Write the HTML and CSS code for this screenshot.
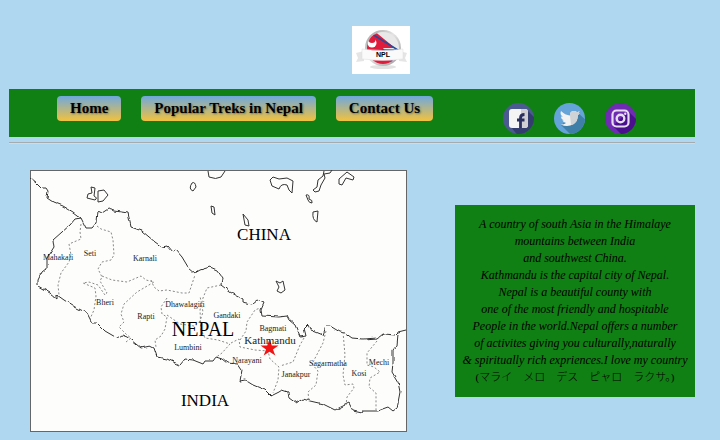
FILE: index.html
```html
<!DOCTYPE html>
<html lang="en">
<head>
<meta charset="utf-8">
<title>Nepal</title>
<link rel="stylesheet" href="styles.css">
</head>
<body>
<header class="brand">
  <svg class="logo" viewBox="0 0 58 48" role="img" aria-label="NPL flag badge">
    <defs>
      <linearGradient id="ring" x1="0" y1="0" x2="1" y2="1"><stop offset="0" stop-color="#999"/><stop offset=".45" stop-color="#e4e4e4"/><stop offset="1" stop-color="#999"/></linearGradient>
      <clipPath id="disc"><circle cx="31" cy="22" r="16"/></clipPath>
    </defs>
    <rect width="58" height="48" fill="#fff"/>
    <ellipse cx="31" cy="41" rx="13" ry="2" fill="#e2e2e2"/>
    <circle cx="31" cy="22" r="18" fill="url(#ring)"/>
    <circle cx="31" cy="22" r="16" fill="#e8e8e9"/>
    <g clip-path="url(#disc)">
      <path d="M14 4h7l22 18H31l13 17H14z" fill="#e01c3c"/>
      <path d="M20 8l26 16H31l13 16" fill="none" stroke="#244b9c" stroke-width="1.500"/>
      <circle cx="20" cy="17" r="4.500" fill="#fff"/><circle cx="20" cy="13.500" r="3.500" fill="#e01c3c"/>
    </g>
    <path d="M4 27l8-2v10l-8 1 2-4zM55 27l-8-2v10l8 1-2-4z" fill="#e5e5e5"/>
    <path d="M10 23q21 3 41 0v10q-20 3-41 0z" fill="#fafafa" stroke="#ddd" stroke-width=".5"/>
    <text class="logo-text" x="31" y="31">NPL</text>
  </svg>
</header>

<nav class="bar" aria-label="Main">
  <ul class="menu">
    <li><a class="pill" href="#home">Home</a></li>
    <li><a class="pill" href="#treks">Popular Treks in Nepal</a></li>
    <li><a class="pill" href="#contact">Contact Us</a></li>
  </ul>
  <ul class="social">
    <li><a href="#facebook" aria-label="Facebook"><svg viewBox="0 0 31 31">
      <clipPath id="round"><circle cx="15.500" cy="15.500" r="15.500"/></clipPath>
      <g clip-path="url(#round)"><path fill="#4b5a91" d="M0 0h31v31H0z"/><path fill="#333d6e" d="M24 7l10 10v17H16L8 24z"/>
      <rect x="6" y="6" width="19" height="19" rx="3" fill="#f4f4f5"/><path d="M18 6h4q3 0 3 3v13q0 3-3 3h-4z" fill="#cfcfd3"/>
      <path d="M17.500 25v-10q0-3.500 4-3.500M14 17h7.500" fill="none" stroke="#29305f" stroke-width="2.800"/></g>
    </svg></a></li>
    <li><a href="#twitter" aria-label="Twitter"><svg viewBox="0 0 31 31">
      <g clip-path="url(#round)"><path fill="#64a4d9" d="M0 0h31v31H0z"/><path fill="#407fa8" d="M24 10l10 9v15H19L7 22z"/>
      <path fill="#f2f2f2" d="M7 8q4 4 9 4.500Q15.500 8 20 8q2 0 3 1.200l2.700-1-1.700 2.300 1.800-.3-2 2q.2 6-4.500 9-5.800 3.500-12.500.3 3.200 0 5.200-1.600-2.700-.4-3.600-2.700h1.700Q7.200 16.500 7 13.400l1.800.4Q5.500 11.500 7 8z"/>
      <path fill="#cfd3d6" d="M16 12.500Q15.500 8 20 8q2 0 3 1.200l2.700-1-1.700 2.300 1.800-.3-2 2q.2 6-4.500 9L17 22z"/></g>
    </svg></a></li>
    <li><a href="#instagram" aria-label="Instagram"><svg viewBox="0 0 31 31">
      <g clip-path="url(#round)"><path fill="#6f2bb3" d="M0 0h31v31H0z"/><path fill="#490f8d" d="M23 8l11 11v15H19L8 23z"/>
      <g fill="none" stroke="#e6def0"><rect x="7.500" y="7.500" width="16" height="16" rx="4" stroke-width="2.200"/><circle cx="15.500" cy="15.500" r="3.800" stroke-width="2.400"/></g><circle cx="20.300" cy="10.700" r="1.200" fill="#e6def0"/></g>
    </svg></a></li>
  </ul>
</nav>
<hr class="rule">

<main class="content">
  <svg class="map" viewBox="30 170 377 262" role="img" aria-label="Map of Nepal">
    <defs><filter id="coast" filterUnits="userSpaceOnUse" x="20" y="160" width="400" height="280"><feTurbulence type="fractalNoise" baseFrequency=".16" numOctaves="1" seed="4"/><feDisplacementMap in="SourceGraphic" scale="4" xChannelSelector="R" yChannelSelector="G"/></filter></defs>
    <rect x="30.500" y="170.500" width="376" height="261" fill="#fdfefc" stroke="#666"/>
    <g class="border" filter="url(#coast)">
      <path d="M31 178L37 183 42 188 46 188 48 191 47 198 53 202 63 206 73 212 81 218 86 228 92 228 97 222 98 211 102 213 108 209 115 211 128 213 131 227 142 231 155 242 162 247 167 246 172 252 176 250 182 257 188 267 195 273 200 270 210 267 217 270 222 277 221 285 230 292 243 299 243 302 252 304 257 300 264 303 261 310 262 316 279 317 287 316 289 320 295 325 300 337 306 336 304 328 308 324 311 330 323 335 326 326 330 326 340 332 345 333 352 338 363 339 378 338 383 334 395 335 398 332 406 330"/>
      <path d="M398 334L397 345 393 350 393 363 392 372 398 382 400 392 397 408 393 411 388 407 377 411 363 411 362 413 353 411 349 403 343 406 335 410 323 404 310 401 303 399 296 403 289 398 288 392 282 390 279 392 271 396 265 390 253 385 245 380 240 381 242 370 238 364 227 363 222 359 216 357 213 361 205 361 203 364 193 360 185 359 180 365 167 359 157 357 154 348 150 346 141 348 127 337 122 335 117 338 105 331 97 323 92 323 87 313 75 307 64 300 57 295 57 299 50 293 38 286 38 280 42 272 47 268 47 258 54 247 53 240 62 232 70 225 75 219 81 218"/>
    </g>
    <g class="lake">
      <path d="M91 187l4 1-1 8q4 2 1 4l-8-2 1-4 4-1zM98 191l6-1 4 5-5 6-5 1zM192 183q3-2 4 4l-3 4q-5-2-1-8zM208 171l1 6q7 3 12 0l4-6M211 206l3 1 1 8-3-2zM243 214l5 6 1 6-4-1zM273 177l6 2 8-1 6 3-1 12-3-3-2-5q-6-2-8 4l-7-3-2-6zM324 171l-1 5-5 4-1 7-4 3 2 2 4-1 2-6 4-7-1-4 6-1 2-3M339 179l8-7 7 5-1 3-7-2-4 7-3-1zM306 195q4-1 3 4 4 1 3 4-3 0-4-3zM313 212l5-1-1 11q-5-2-4-10zM276 281l4 2 3-2 2 9-4 3-4-2 2-4z"/>
    </g>
    <g class="district">
      <path d="M81 224l-1 8 1 7-12 5 2 11-2 7-8 11-3 12 1 10M97 226l4 3 10 3 2 8 1 15-3 5-9 2-4 7 4 8-2 4 7 12-2 2-7-10-9-3-6 1 12 5 1 8-2 14-4 9"/>
      <path d="M102 276l10 4 15 2 14-6 5 4 8 2-17 10-13 12-3 10 3 8-5 5 8 8 4 3-5 4M151 280l3 7 5 4 8-1 15 3h7l6-18M167 298l-6 9 1 7 5 3-2 12-4 7-6 4 1 7M167 315l13 9 14 2 6-5 3-9-3-16M221 285l-14 3-4 10-3 12 1 20 4 8 13 2 12 4-8 9-7 5M231 343l8-4 1 8 15 3 13 1 2 8 9 8-1 13-5 13M240 340l6-9 1-9 8-12 5-2"/>
      <path d="M304 338l-4 7-7 17-13 4M326 331l-3 12-11 21 6 7-2 14-8 7 1 9M343 332l2 23-2 20 2 10 8-1 1 4-7 9-1 8M377 341l-10 12v12l7 2 6 5-10 6-1 9 7 6v17"/>
    </g>
    <path d="M269.500 339l2.300 6.500h6.700l-5.500 4 2.300 6-5.800-3.800-5.800 3.800 2.300-6-5.500-4h6.700z" fill="#f01414"/>
    <g class="place">
      <text x="58" y="260">Mahakali</text><text x="90" y="256">Seti</text><text x="145" y="261">Karnali</text><text x="105" y="305">Bheri</text><text x="146" y="319">Rapti</text><text x="185" y="307">Dhawalagiri</text><text x="227" y="318">Gandaki</text><text x="273" y="331">Bagmati</text><text x="188" y="350">Lumbini</text><text x="247" y="363">Narayani</text><text x="296" y="377">Janakpur</text><text x="328" y="366">Sagarmatha</text><text x="359" y="376">Kosi</text><text x="379" y="365">Mechi</text>
      <text class="capital" x="270" y="344">Kathmandu</text>
      <text class="country" x="264" y="240">CHINA</text><text class="country" x="205" y="406">INDIA</text><text class="nation" x="203" y="336">NEPAL</text>
    </g>
  </svg>
  <p class="about">A country of south Asia in the Himalaye<br>mountains between India<br>and southwest China.<br>Kathmandu is the capital city of Nepal.<br>Nepal is a beautiful county with<br>one of the most friendly and hospitable<br>People in the world.Nepal offers a number<br>of activites giving you culturally,naturally<br>&amp; spiritually rich expriences.I love my country<br><span lang="ja">(マライ　メロ　デス　ピャロ　ラクサ。)</span></p>
</main>
</body>
</html>
```
FILE: styles.css
```css
* { box-sizing: border-box; }
body {
  margin: 0;
  padding: 26px 25px 8px 9px;
  background: #afd7f0;
  color: #000;
  font-family: "Liberation Serif", serif;
}
svg { display: block; }
ul { margin: 0; padding: 0; list-style: none; display: flex; }
.brand { padding-left: 50%; margin-bottom: 15px; }
.logo { width: 58px; height: 48px; }
.logo-text { font: bold 7px "Liberation Sans", sans-serif; text-anchor: middle; }
.bar {
  display: grid;
  grid-template-columns: 72% 1fr;
  align-items: start;
  min-height: 48px;
  background: #108014;
}
.menu { gap: 20px; padding: 7px 0 0 48px; }
.pill {
  display: block;
  padding: 0 13px;
  border-radius: 4px;
  background: linear-gradient(#6fa8dc, #f1c23e);
  color: #000;
  font-size: 15px;
  font-weight: bold;
  line-height: 25px;
  text-decoration: none;
  text-shadow: 1px 1px 2px rgba(0, 0, 0, .4);
  white-space: nowrap;
}
.social { gap: 20px; padding-top: 14px; }
.social svg { width: 31px; height: 31px; }
.rule {
  margin: 5px 0 0;
  border: 0;
  border-top: 1px solid #a5acb0;
  border-bottom: 1px solid #d5dade;
}
.content {
  display: flex;
  justify-content: space-between;
  align-items: center;
  margin-top: 26px;
  padding-left: 21px;
}
.map { width: 377px; flex: 0 1 auto; min-width: 0; }
.border { fill: none; stroke: #333; stroke-width: 1; }
.lake { fill: none; stroke: #333; stroke-width: 1; }
.district { fill: none; stroke: #888; stroke-width: 1; stroke-dasharray: 2 2; }
.place { font-size: 8px; text-anchor: middle; fill: #222; }
.capital { font-size: 11px; }
.country { font-size: 17px; fill: #000; }
.nation { font-size: 20px; fill: #000; }
.about {
  width: 240px;
  margin: 0;
  padding: 11px 0;
  background: #108014;
  font-family: "Liberation Serif", "Noto Sans CJK JP", serif;
  font-size: 12px;
  font-style: italic;
  line-height: 17px;
  text-align: center;
  white-space: nowrap;
}
.about span { font-size: 11px; font-style: normal; font-weight: 300; }
```
